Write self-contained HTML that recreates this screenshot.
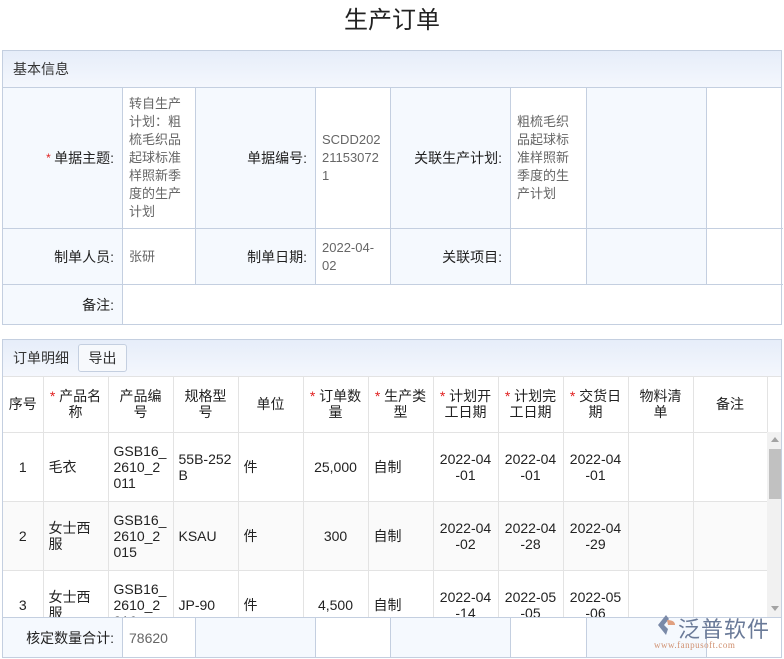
<!DOCTYPE html>
<html><head><meta charset="utf-8">
<style>
*{margin:0;padding:0;box-sizing:border-box}
body{width:784px;height:659px;background:#fff;font-family:"Liberation Sans","Noto Sans CJK SC",sans-serif;position:relative;overflow:hidden;color:#333}
.abs{position:absolute}
h1{position:absolute;left:0;width:784px;top:0px;text-align:center;font-size:24px;font-weight:normal;color:#222}
.box{position:absolute;left:2px;width:780px;border:1px solid #c4cfe0}
.hd{height:37px;background:linear-gradient(#e6edf9,#f4f7fd);border-bottom:1px solid #c4cfe0;font-size:14px;color:#333;padding-left:10px;line-height:36px}
.c{position:absolute;border-right:1px solid #c4cfe0;border-bottom:1px solid #c4cfe0;font-size:13px}
.l{background:#f5f9fe;text-align:right;padding-right:8px;color:#222;display:flex;align-items:center;justify-content:flex-end;font-size:14px}
.v{color:#666;padding:6px;line-height:18px;display:flex;align-items:center}
.r{color:#e02020}
table{border-collapse:collapse;position:absolute;left:0;top:37px;table-layout:fixed;font-size:14px;color:#222}
td,th{border-right:1px solid #e3e3e3;border-bottom:1px solid #e3e3e3;font-weight:normal;line-height:16px;overflow:hidden;word-break:break-all}
th{height:55px;text-align:center;padding:0 8px}
td{height:69px;padding:0 5px;vertical-align:middle}
</style></head><body>
<h1>生产订单</h1>
<div class="box" style="top:50px;height:275px">
<div class="hd">基本信息</div>
<div class="c l" style="left:0;top:37px;width:120px;height:141px"><span class="r" style="font-size:12px">*&nbsp;</span>单据主题:</div>
<div class="c v" style="left:120px;top:37px;width:73px;height:141px">转自生产计划：粗梳毛织品起球标准样照新季度的生产计划</div>
<div class="c l" style="left:193px;top:37px;width:120px;height:141px">单据编号:</div>
<div class="c v" style="left:313px;top:37px;width:75px;height:141px;word-break:break-all">SCDD20221153072 1</div>
<div class="c l" style="left:388px;top:37px;width:120px;height:141px">关联生产计划:</div>
<div class="c v" style="left:508px;top:37px;width:76px;height:141px">粗梳毛织品起球标准样照新季度的生产计划</div>
<div class="c l" style="left:584px;top:37px;width:120px;height:141px"></div>
<div class="c" style="left:704px;top:37px;width:76px;height:141px;border-right:0"></div>

<div class="c l" style="left:0;top:178px;width:120px;height:56px">制单人员:</div>
<div class="c v" style="left:120px;top:178px;width:73px;height:56px">张研</div>
<div class="c l" style="left:193px;top:178px;width:120px;height:56px">制单日期:</div>
<div class="c v" style="left:313px;top:178px;width:75px;height:56px">2022-04-02</div>
<div class="c l" style="left:388px;top:178px;width:120px;height:56px">关联项目:</div>
<div class="c v" style="left:508px;top:178px;width:76px;height:56px"></div>
<div class="c l" style="left:584px;top:178px;width:120px;height:56px"></div>
<div class="c" style="left:704px;top:178px;width:76px;height:56px;border-right:0"></div>

<div class="c l" style="left:0;top:234px;width:120px;height:39px;border-bottom:0">备注:</div>
</div>

<div class="box" style="top:339px;height:319px;overflow:hidden">
<div class="hd" style="border-bottom-color:#e3e3e3">订单明细<span class="abs" style="left:75px;top:4px;width:49px;height:28px;border:1px solid #c4cfe0;border-radius:3px;background:#f7f9fc;text-align:center;line-height:26px;font-size:14px">导出</span></div>
<table>
<colgroup><col style="width:40px"><col style="width:65px"><col style="width:65px"><col style="width:65px"><col style="width:65px"><col style="width:65px"><col style="width:65px"><col style="width:65px"><col style="width:65px"><col style="width:65px"><col style="width:65px"><col style="width:74px"></colgroup>
<tr><th style="padding:0 2px">序号</th><th style="padding:0 4px"><span class="r">*</span> 产品名称</th><th>产品编号</th><th>规格型号</th><th>单位</th><th style="padding:0 4px"><span class="r">*</span> 订单数量</th><th style="padding:0 4px"><span class="r">*</span> 生产类型</th><th style="padding:0 4px"><span class="r">*</span> 计划开工日期</th><th style="padding:0 4px"><span class="r">*</span> 计划完工日期</th><th style="padding:0 4px"><span class="r">*</span> 交货日期</th><th>物料清单</th><th>备注</th></tr>
<tr><td style="text-align:center">1</td><td>毛衣</td><td>GSB16_2610_2011</td><td>55B-252B</td><td>件</td><td style="text-align:center">25,000</td><td>自制</td><td style="text-align:center">2022-04-01</td><td style="text-align:center">2022-04-01</td><td style="text-align:center">2022-04-01</td><td></td><td></td></tr>
<tr style="background:#fafafa"><td style="text-align:center">2</td><td>女士西服</td><td>GSB16_2610_2015</td><td>KSAU</td><td>件</td><td style="text-align:center">300</td><td>自制</td><td style="text-align:center">2022-04-02</td><td style="text-align:center">2022-04-28</td><td style="text-align:center">2022-04-29</td><td></td><td></td></tr>
<tr><td style="text-align:center">3</td><td>女士西服</td><td>GSB16_2610_2016</td><td>JP-90</td><td>件</td><td style="text-align:center">4,500</td><td>自制</td><td style="text-align:center">2022-04-14</td><td style="text-align:center">2022-05-05</td><td style="text-align:center">2022-05-06</td><td></td><td></td></tr>
</table>
<div class="abs" style="left:764px;top:92px;width:16px;height:185px;background:#f1f1f1">
<div class="abs" style="left:4px;top:5px;border:4px solid transparent;border-bottom:5px solid #a3a3a3;border-top:0"></div>
<div class="abs" style="left:2px;top:17px;width:12px;height:50px;background:#c1c1c1"></div>
<div class="abs" style="left:4px;top:174px;border:4px solid transparent;border-top:5px solid #a3a3a3;border-bottom:0"></div>
</div>
<div class="abs" style="left:0;top:277px;width:780px;height:41px;border-top:1px solid #c4cfe0;background:#fff">
<div class="c l" style="left:0;top:0;width:120px;height:40px;border-bottom:0">核定数量合计:</div>
<div class="c v" style="left:120px;top:0;width:73px;height:40px;border-bottom:0;font-size:14px">78620</div>
<div class="c l" style="left:193px;top:0;width:120px;height:40px;border-bottom:0"></div>
<div class="c" style="left:313px;top:0;width:75px;height:40px;border-bottom:0"></div>
<div class="c l" style="left:388px;top:0;width:120px;height:40px;border-bottom:0"></div>
<div class="c" style="left:508px;top:0;width:76px;height:40px;border-bottom:0"></div>
<div class="c l" style="left:584px;top:0;width:120px;height:40px;border-bottom:0"></div>
</div>
</div>
<div class="abs" style="left:655px;top:614px;width:22px;height:22px">
<svg width="22" height="22" viewBox="0 0 22 22"><path d="M11 1 L3 11 L11 21 L13 15 L9 11 L14 5Z" fill="#7a8aa8"/><path d="M12 6 Q20 6 20 11 L13 11Z" fill="#e0a080"/></svg></div>
<div class="abs" style="left:678px;top:612px;font-size:22px;color:#6a7a98;letter-spacing:1px">泛普软件</div>
<div class="abs" style="left:654px;top:640px;font-size:9px;color:#d09070;font-family:'Liberation Serif',serif;letter-spacing:0.5px">www.fanpusoft.com</div>
</body></html>
